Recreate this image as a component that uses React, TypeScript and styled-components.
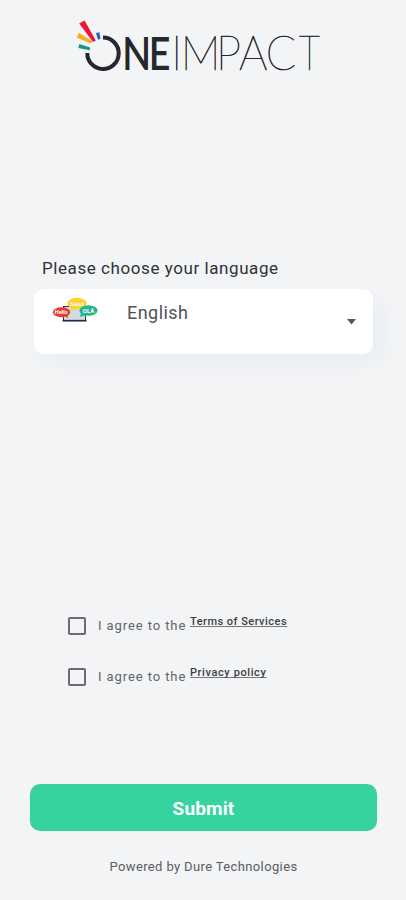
import React from "react";
import styled, { createGlobalStyle } from "styled-components";

const GlobalStyle = createGlobalStyle`
  * { box-sizing: border-box; }
  body { margin: 0; background: #f2f4f6; }
`;

const Screen = styled.main`
  display: flex;
  flex-direction: column;
  width: 406px;
  height: 900px;
  background: #f2f4f6;
  color: #303236;
  font-family: Roboto, "Liberation Sans", sans-serif;
`;

const Header = styled.header`
  height: 90px;
  padding: 6px 0 0 74px;
`;

const LogoSvg = styled.svg`
  display: block;
`;

const LanguageSection = styled.section`
  margin-top: 168px;
  padding: 0 34px;
`;

const Label = styled.h1`
  margin: 0 0 10px 8px;
  font-size: 17px;
  font-weight: 400;
  line-height: 21px;
  letter-spacing: 0.57px;
  white-space: nowrap;
`;

const Select = styled.button`
  display: flex;
  align-items: flex-start;
  width: 339px;
  height: 65px;
  padding: 8px 17px 0 18px;
  border: 0;
  border-radius: 10px;
  background: #fff;
  box-shadow: 8px 8px 20px rgba(50, 65, 90, 0.04);
  color: #505256;
  font-family: inherit;
  text-align: left;
`;

const SelectValue = styled.span`
  flex: 1;
  margin-left: 29px;
  padding-top: 5px;
  font-size: 18px;
  line-height: 22px;
  letter-spacing: 0.45px;
`;

const Caret = styled.svg`
  margin-top: 21.5px;
`;

const Agreements = styled.section`
  display: flex;
  flex-direction: column;
  gap: 31px;
  margin-top: 262px;
  padding-left: 68px;
`;

const Agreement = styled.div`
  display: flex;
  align-items: center;
  height: 20px;
`;

const Checkbox = styled.input`
  appearance: none;
  width: 18px;
  height: 18px;
  margin: 0 12px 0 0;
  border: 2px solid #696b6e;
  border-radius: 2px;
`;

const AgreementText = styled.span`
  width: 92px;
  color: #626468;
  font-size: 13px;
  line-height: 18px;
  letter-spacing: 0.91px;
  white-space: nowrap;
`;

const PolicyLink = styled.a<{ $spacing: number }>`
  margin-top: -8px;
  color: #3c3e42;
  font-size: 11px;
  font-weight: 500;
  line-height: 14px;
  letter-spacing: ${(p) => p.$spacing}px;
  text-decoration: underline;
  text-decoration-color: #777;
  text-decoration-thickness: 1px;
  text-underline-offset: 1px;
  text-decoration-skip-ink: none;
  white-space: nowrap;
`;

const Footer = styled.footer`
  display: flex;
  flex-direction: column;
  align-items: center;
  margin-top: auto;
  padding: 0 29px 24px 30px;
`;

const Submit = styled.button`
  width: 347px;
  height: 47px;
  padding: 1px 0 0;
  border: 0;
  border-radius: 10px;
  background: #37d39f;
  color: #fff;
  font-family: inherit;
  font-size: 19px;
  font-weight: 700;
  letter-spacing: 0.15px;
`;

const Powered = styled.p`
  margin: 27px 0 0;
  color: #5b5d61;
  font-size: 13px;
  line-height: 18px;
  letter-spacing: 0.37px;
  white-space: nowrap;
`;

function Logo() {
  return (
    <LogoSvg width="260" height="84" viewBox="74 6 260 84" role="img" aria-label="OneImpact">
      <path d="M103 37.6A15.7 15.7 0 1 1 87.3 53" fill="none" stroke="#25272b" strokeWidth="4" />
      <path d="M79.2 23.4L84.5 20.6L95.8 40.6L93 42Z" fill="#ed1735" />
      <path d="M79 32.8L92.2 41.3L91 43.6L76.5 37.4Z" fill="#fbad22" />
      <path d="M79.4 44L90.1 47.4L89.7 50.2L78.3 48Z" fill="#159488" />
      <path d="M96 33L99.4 32.2L100.6 38.8L97.9 39.8Z" fill="#2465b5" />
      <g fill="#25272b" fontFamily="Lato" fontSize="47">
        <text transform="translate(122.2 70) scale(0.8 1)" x="0 33.2" fontWeight="600">NE</text>
        <g fontWeight="200" stroke="#25272b" strokeWidth="0.65">
          <text transform="translate(171.3 70) scale(0.95 1)" x="0 10 47 71.3 99.5">IMPAC</text>
          <text transform="translate(299 70) scale(0.78 1)">T</text>
        </g>
      </g>
    </LogoSvg>
  );
}

function LanguageIcon() {
  return (
    <svg width="46" height="28" viewBox="0 0 46 28" aria-hidden="true">
      <rect x="11.5" y="9.5" width="22" height="14" fill="#d5dbe2" stroke="#25354a" />
      <path d="M10.5 23.7H34.5" stroke="#1c2e40" strokeWidth="1.7" />
      <path d="M20 10L18 14L26 11Z" fill="#ffd12c" />
      <ellipse cx="25" cy="6.5" rx="9.7" ry="5.7" fill="#ffd12c" />
      <ellipse cx="9.5" cy="15.3" rx="8.7" ry="5" fill="#e93c31" />
      <path d="M11 18L16 21L16 16Z" fill="#e93c31" />
      <ellipse cx="36.5" cy="13.5" rx="9.1" ry="5.2" fill="#25b58d" />
      <path d="M29 16L28 20L34 18Z" fill="#25b58d" />
      <g fill="#fff" fontFamily="Roboto" fontWeight="700" textAnchor="middle">
        <text x="25" y="8.5" fontSize="6">Salut</text>
        <text x="9.3" y="17.2" fontSize="5.5">Hello</text>
        <text x="36.6" y="15.7" fontSize="6">OLÁ</text>
      </g>
    </svg>
  );
}

export default function App() {
  return (
    <>
      <GlobalStyle />
      <Screen>
        <Header><Logo /></Header>
        <LanguageSection>
          <Label>Please choose your language</Label>
          <Select>
            <LanguageIcon />
            <SelectValue>English</SelectValue>
            <Caret width="9" height="6" viewBox="0 0 9 6" aria-hidden="true">
              <path d="M0 0H9L4.5 5.5Z" fill="#55575a" />
            </Caret>
          </Select>
        </LanguageSection>
        <Agreements>
          <Agreement>
            <Checkbox type="checkbox" aria-label="Agree to the terms" />
            <AgreementText>I agree to the</AgreementText>
            <PolicyLink $spacing={0.48}>Terms of Services</PolicyLink>
          </Agreement>
          <Agreement>
            <Checkbox type="checkbox" aria-label="Agree to the privacy policy" />
            <AgreementText>I agree to the</AgreementText>
            <PolicyLink $spacing={0.6}>Privacy policy</PolicyLink>
          </Agreement>
        </Agreements>
        <Footer>
          <Submit>Submit</Submit>
          <Powered>Powered by Dure Technologies</Powered>
        </Footer>
      </Screen>
    </>
  );
}
